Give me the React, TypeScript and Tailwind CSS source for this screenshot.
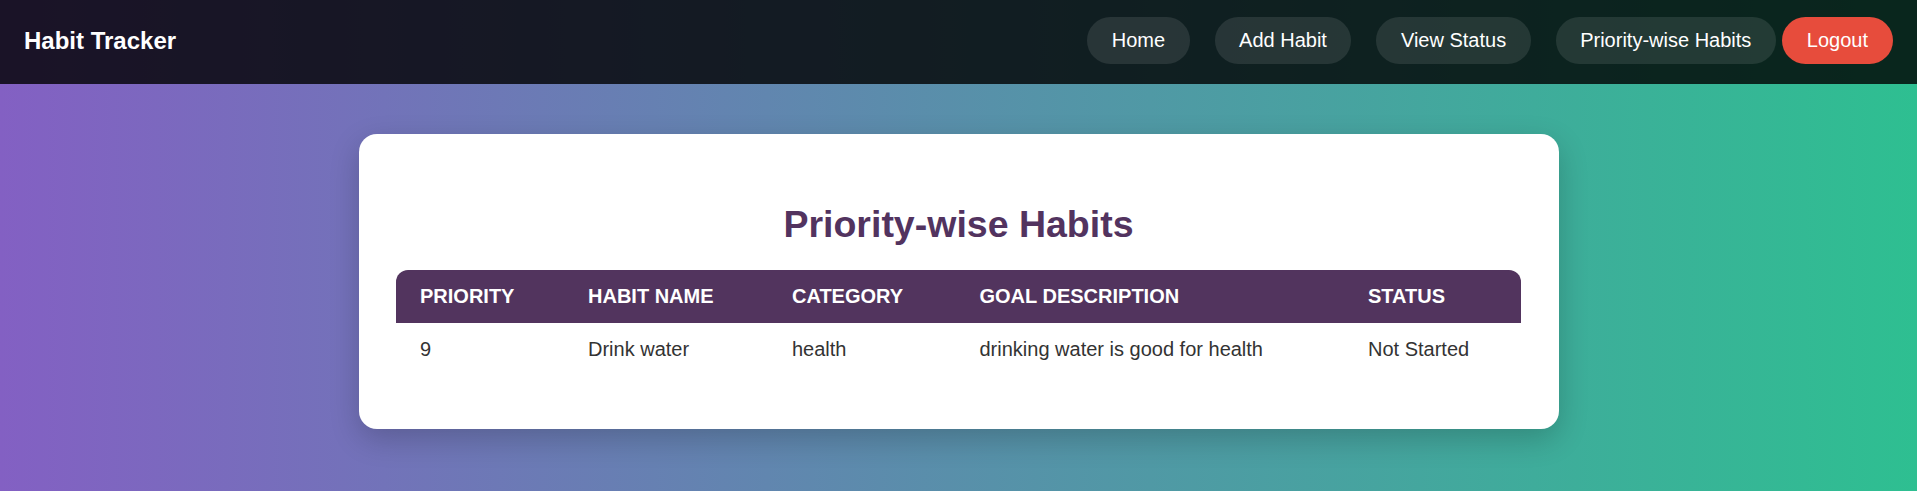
import React from "react";

type Habit = {
  priority: number;
  name: string;
  category: string;
  goal: string;
  status: string;
};

const habits: Habit[] = [
  {
    priority: 9,
    name: "Drink water",
    category: "health",
    goal: "drinking water is good for health",
    status: "Not Started",
  },
];

const links = ["Home", "Add Habit", "View Status", "Priority-wise Habits"];

function Navbar() {
  return (
    <nav className="h-[84px] px-6 pb-[3px] flex items-center justify-between bg-black/80">
      <div className="text-[24px] font-bold text-white">Habit Tracker</div>
      <div className="flex items-center">
        <div className="flex items-center gap-[25px]">
          {links.map((l) => (
            <a
              key={l}
              href="#"
              className="px-[24.5px] py-3 rounded-full bg-white/10 text-white text-[20px] leading-[23.5px]"
            >
              {l}
            </a>
          ))}
        </div>
        <button className="ml-[6px] px-[25px] py-3 rounded-full bg-[#e74c3c] text-white text-[20px] leading-[23.5px]">
          Logout
        </button>
      </div>
    </nav>
  );
}

export default function App() {
  return (
    <div
      className="min-h-screen bg-[linear-gradient(to_right,#8360c3,#2ebf91)]"
      style={{ fontFamily: '"Liberation Sans", Arial, sans-serif' }}
    >
      <Navbar />

      <div className="flex justify-center pt-[50px] pb-10">
        <div className="w-[1200px] bg-white rounded-[18px] p-[37.5px] shadow-[0_10px_30px_rgba(0,0,0,0.2)]">
          <h2 className="mt-[31px] mb-[24px] text-center text-[37.5px] leading-[43px] font-bold text-[#52335f]">
            Priority-wise Habits
          </h2>

          <table className="w-full table-fixed border-collapse mb-4 text-[20px] leading-[23px]">
            <colgroup>
              <col className="w-[168px]" />
              <col className="w-[204px]" />
              <col className="w-[187.5px]" />
              <col className="w-[388.5px]" />
              <col className="w-[177px]" />
            </colgroup>
            <thead>
              <tr className="bg-[#52345e] text-white uppercase text-left">
                <th className="px-6 py-[15px] font-bold rounded-tl-[12px]">Priority</th>
                <th className="px-6 py-[15px] font-bold">Habit Name</th>
                <th className="px-6 py-[15px] font-bold">Category</th>
                <th className="px-6 py-[15px] font-bold">Goal Description</th>
                <th className="px-6 py-[15px] font-bold rounded-tr-[12px]">Status</th>
              </tr>
            </thead>
            <tbody>
              {habits.map((h) => (
                <tr key={h.name} className="text-[#333]">
                  <td className="px-6 py-[15px]">{h.priority}</td>
                  <td className="px-6 py-[15px]">{h.name}</td>
                  <td className="px-6 py-[15px]">{h.category}</td>
                  <td className="px-6 py-[15px]">{h.goal}</td>
                  <td className="px-6 py-[15px]">{h.status}</td>
                </tr>
              ))}
            </tbody>
          </table>
        </div>
      </div>
    </div>
  );
}
